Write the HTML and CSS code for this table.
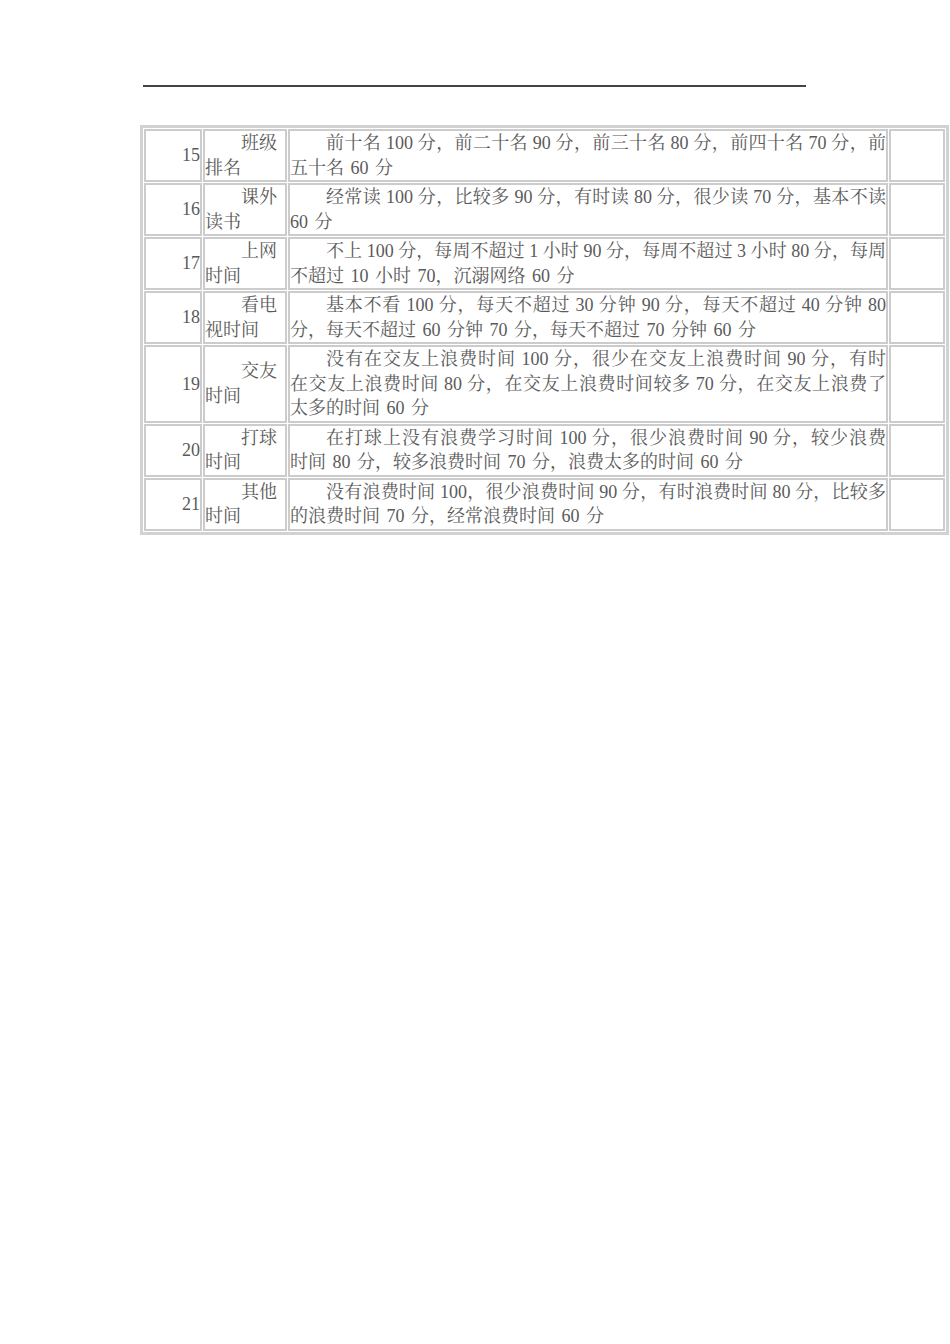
FILE: index.html
```html
<!DOCTYPE html>
<html lang="zh-CN">
<head>
<meta charset="utf-8">
<title>评分表</title>
<link rel="stylesheet" href="styles.css">
</head>
<body>
<div class="page">
  <div class="rule"></div>
  <table class="score">
    <colgroup>
      <col class="c-num"><col class="c-name"><col class="c-text"><col class="c-blank">
    </colgroup>
    <tbody>
      <tr>
        <td class="num">15</td>
        <td class="name"><span class="l ind">班级</span><span class="l">排名</span></td>
        <td class="text"><span class="l ind just">前十名 100 分，前二十名 90 分，前三十名 80 分，前四十名 70 分，前</span><span class="l">五十名 60 分</span></td>
        <td class="blank"></td>
      </tr>
      <tr>
        <td class="num">16</td>
        <td class="name"><span class="l ind">课外</span><span class="l">读书</span></td>
        <td class="text"><span class="l ind just">经常读 100 分，比较多 90 分，有时读 80 分，很少读 70 分，基本不读</span><span class="l">60 分</span></td>
        <td class="blank"></td>
      </tr>
      <tr>
        <td class="num">17</td>
        <td class="name"><span class="l ind">上网</span><span class="l">时间</span></td>
        <td class="text"><span class="l ind just">不上 100 分，每周不超过 1 小时 90 分，每周不超过 3 小时 80 分，每周</span><span class="l">不超过 10 小时 70，沉溺网络 60 分</span></td>
        <td class="blank"></td>
      </tr>
      <tr>
        <td class="num">18</td>
        <td class="name"><span class="l ind">看电</span><span class="l">视时间</span></td>
        <td class="text"><span class="l ind just">基本不看 100 分，每天不超过 30 分钟 90 分，每天不超过 40 分钟 80</span><span class="l">分，每天不超过 60 分钟 70 分，每天不超过 70 分钟 60 分</span></td>
        <td class="blank"></td>
      </tr>
      <tr>
        <td class="num">19</td>
        <td class="name"><span class="l ind">交友</span><span class="l">时间</span></td>
        <td class="text"><span class="l ind just">没有在交友上浪费时间 100 分，很少在交友上浪费时间 90 分，有时</span><span class="l just">在交友上浪费时间 80 分，在交友上浪费时间较多 70 分，在交友上浪费了</span><span class="l">太多的时间 60 分</span></td>
        <td class="blank"></td>
      </tr>
      <tr>
        <td class="num">20</td>
        <td class="name"><span class="l ind">打球</span><span class="l">时间</span></td>
        <td class="text"><span class="l ind just">在打球上没有浪费学习时间 100 分，很少浪费时间 90 分，较少浪费</span><span class="l">时间 80 分，较多浪费时间 70 分，浪费太多的时间 60 分</span></td>
        <td class="blank"></td>
      </tr>
      <tr>
        <td class="num">21</td>
        <td class="name"><span class="l ind">其他</span><span class="l">时间</span></td>
        <td class="text"><span class="l ind just">没有浪费时间 100，很少浪费时间 90 分，有时浪费时间 80 分，比较多</span><span class="l">的浪费时间 70 分，经常浪费时间 60 分</span></td>
        <td class="blank"></td>
      </tr>
    </tbody>
  </table>
</div>
</body>
</html>
```

FILE: styles.css
```css
html, body {
  margin: 0;
  padding: 0;
  background: #ffffff;
}

.page {
  padding-top: 85px;
  font-family: "Liberation Serif", "Noto Serif CJK SC", "Noto Sans CJK SC", serif;
  font-size: 18px;
  color: #5a5a5a;
}

.rule {
  width: 663px;
  height: 2px;
  margin-left: 143px;
  background: #454545;
}

.score {
  margin-top: 38px;
  margin-left: 140px;
  width: 809px;
  table-layout: fixed;
  border-collapse: separate;
  border-spacing: 1px;
  border: 3px solid #d2d2d2;
}

.c-num { width: 58px; }
.c-name { width: 84px; }
.c-text { width: 600px; }
.c-blank { width: 56px; }

.score td {
  border: 2px solid #cccccc;
  padding: 0;
  line-height: 24.5px;
  vertical-align: middle;
}

.num {
  text-align: right;
}

.l {
  display: block;
  text-align: left;
  white-space: nowrap;
  word-spacing: 2px;
}

.l.ind {
  text-indent: 2em;
}

.l.just {
  word-spacing: 0;
  text-align: justify;
  text-align-last: justify;
}
```
